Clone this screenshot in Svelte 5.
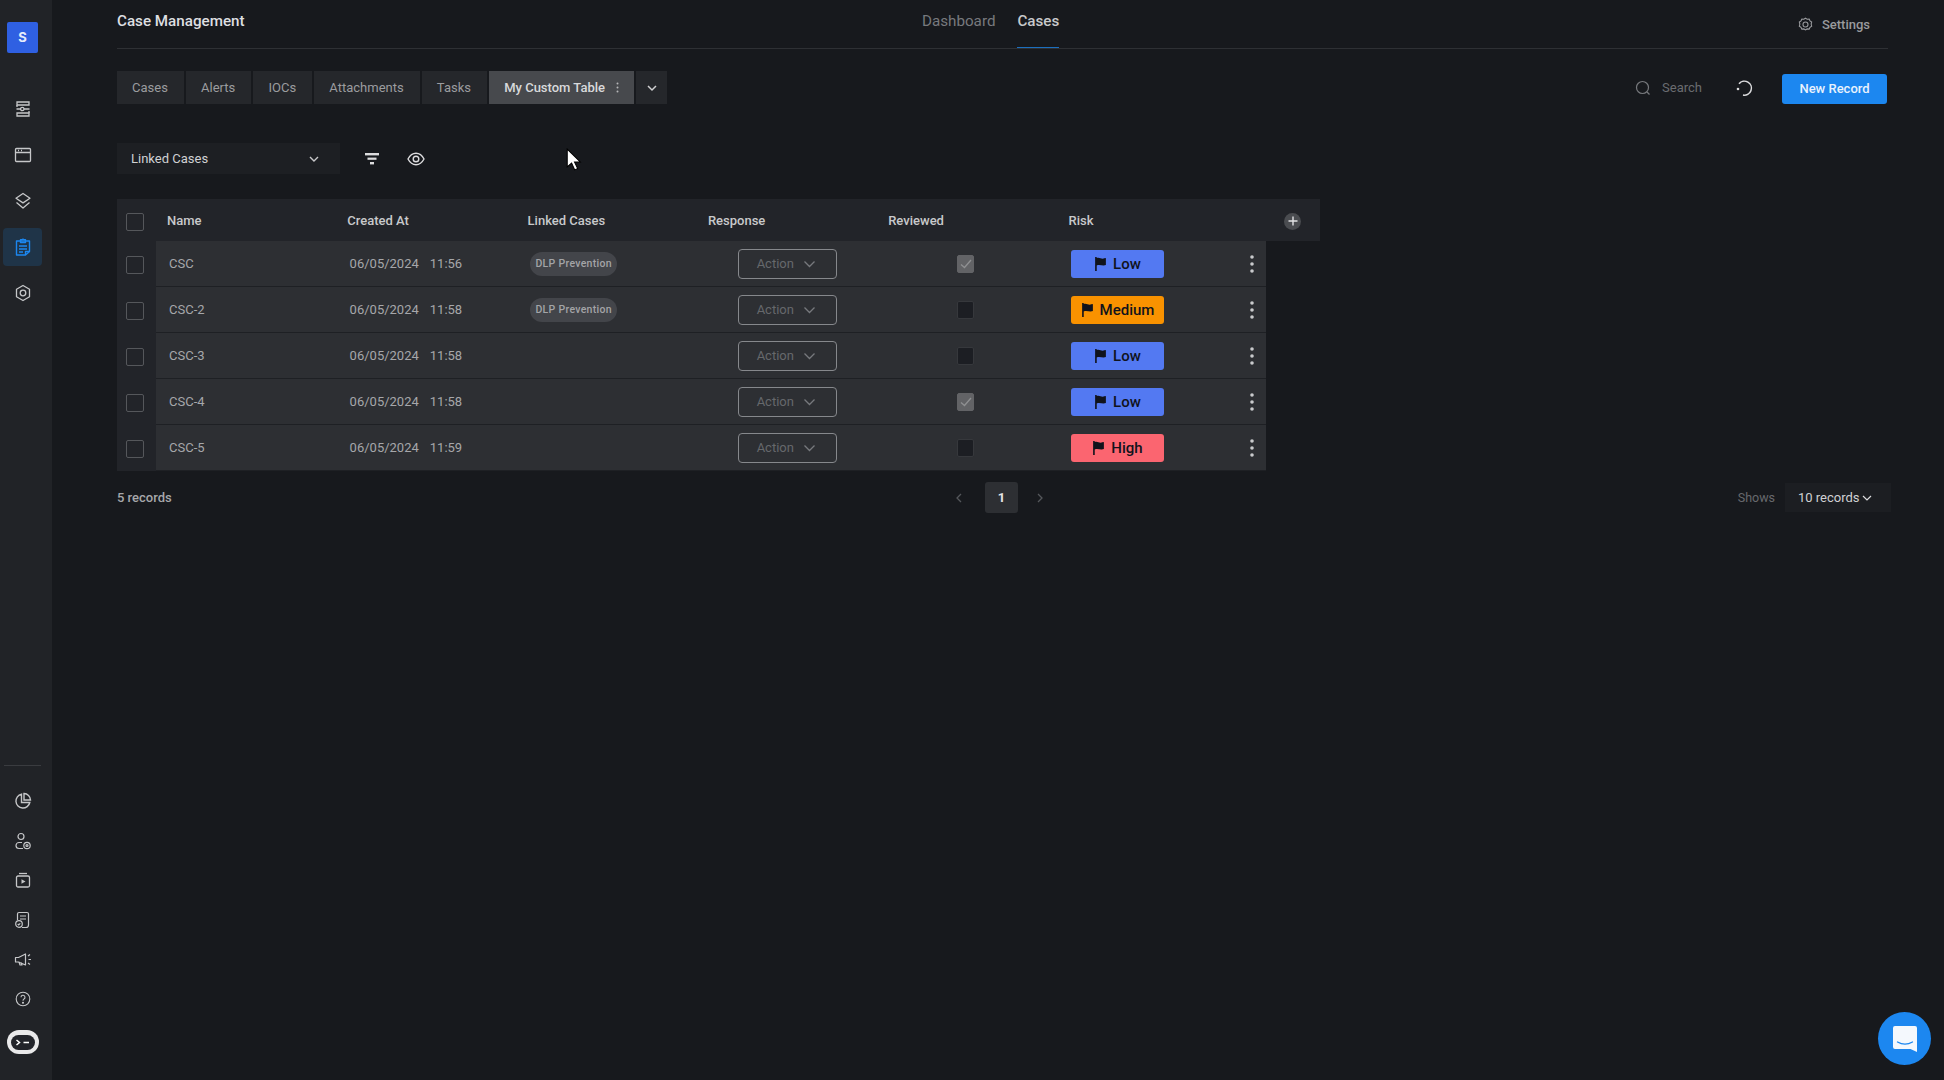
<script>
  const tabs = ['Cases', 'Alerts', 'IOCs', 'Attachments', 'Tasks'];
  const columns = ['Name', 'Created At', 'Linked Cases', 'Response', 'Reviewed', 'Risk'];
  const rows = [
    { name: 'CSC', time: '11:56', linked: true, reviewed: true, risk: 'Low' },
    { name: 'CSC-2', time: '11:58', linked: true, reviewed: false, risk: 'Medium' },
    { name: 'CSC-3', time: '11:58', linked: false, reviewed: false, risk: 'Low' },
    { name: 'CSC-4', time: '11:58', linked: false, reviewed: true, risk: 'Low' },
    { name: 'CSC-5', time: '11:59', linked: false, reviewed: false, risk: 'High' }
  ];
</script>

<div class="app">
  <aside class="sidebar">
    <div class="logo">S</div>
    <nav class="nav-top">
      <div class="slot">
        <svg width="18" height="18" viewBox="0 0 18 18" fill="none" stroke="currentColor" stroke-width="1.3">
          <path d="M3 2h12v3H3zM3 13h12v3H3z" />
          <path d="M2.500 9h4M10 9h5.500M3 5v2M15 11v2" />
          <circle cx="8.300" cy="9" r="1.700" />
        </svg>
      </div>
      <div class="slot">
        <svg width="18" height="18" viewBox="0 0 18 18" fill="none" stroke="currentColor" stroke-width="1.3">
          <rect x="1.500" y="2.500" width="15" height="13" rx="1" />
          <path d="M1.500 6.500h15M4 4.500h1M7 4.500h1" />
        </svg>
      </div>
      <div class="slot">
        <svg width="18" height="18" viewBox="0 0 18 18" fill="none" stroke="currentColor" stroke-width="1.3" stroke-linejoin="round">
          <path d="M9 1.500l7 4.700-7 4.700-7-4.700z" />
          <path d="M2.500 10.500L9 16l6.500-5.500" />
        </svg>
      </div>
      <div class="slot active">
        <svg width="18" height="20" viewBox="0 0 18 20" fill="none" stroke="currentColor" stroke-width="1.400" stroke-linejoin="round">
          <path d="M2.500 4h13v10.500L11.500 18h-9z" />
          <path d="M6.500 4V2.800h1.600a1 1 0 0 1 1.800 0h1.600v2.700h-5z" />
          <path d="M5 9h8M5 12h8M5 15h4M11.500 18v-3.500h4" />
        </svg>
      </div>
      <div class="slot">
        <svg width="18" height="18" viewBox="0 0 18 18" fill="none" stroke="currentColor" stroke-width="1.300" stroke-linejoin="round">
          <path d="M9 1.500l6.500 3.700v7.600L9 16.500l-6.500-3.700V5.200z" />
          <circle cx="9" cy="9" r="2.800" />
        </svg>
      </div>
    </nav>
    <div class="nav-bottom">
      <div class="slot-sm">
        <svg width="18" height="18" viewBox="0 0 18 18" fill="none" stroke="currentColor" stroke-width="1.400">
          <path d="M7.500 2.200A7 7 0 1 0 15.800 10.500H7.500z" />
          <path d="M10 1.500a6.800 6.800 0 0 1 6.500 6.500H10z" />
        </svg>
      </div>
      <div class="slot-sm">
        <svg width="18" height="18" viewBox="0 0 18 18" fill="none" stroke="currentColor" stroke-width="1.200">
          <circle cx="7" cy="4.500" r="3" />
          <path d="M8 10.500H5a3 3 0 0 0 0 6h4" />
          <circle cx="13" cy="13.500" r="3.200" />
          <circle cx="13" cy="13.500" r="1" />
        </svg>
      </div>
      <div class="slot-sm">
        <svg width="18" height="18" viewBox="0 0 18 18" fill="none" stroke="currentColor" stroke-width="1.300">
          <rect x="2.500" y="5" width="13" height="11" rx="1.500" />
          <path d="M5 2.500h8" />
          <path d="M7.500 8.200l4 2.300-4 2.300z" fill="currentColor" stroke="none" />
        </svg>
      </div>
      <div class="slot-sm">
        <svg width="18" height="18" viewBox="0 0 18 18" fill="none" stroke="currentColor" stroke-width="1.200">
          <path d="M3.500 9V3A1.500 1.500 0 0 1 5 1.500h8A1.500 1.500 0 0 1 14.500 3v11a2.500 2.500 0 0 1-2.500 2.500H8" />
          <path d="M6 5h6M6 8h6" />
          <circle cx="5" cy="13" r="3.300" />
          <path d="M3.700 13l1 1 1.600-1.700" />
        </svg>
      </div>
      <div class="slot-sm">
        <svg width="18" height="18" viewBox="0 0 18 18" fill="none" stroke="currentColor" stroke-width="1.200" stroke-linejoin="round">
          <path d="M1.500 6.500h3l7-3.500v11l-7-3h-3z" />
          <path d="M5 11l1 3h2l-.8-2.200M14 5l2-1.500M14.500 8.500H17M14 12l2 1.500" />
        </svg>
      </div>
      <div class="slot-sm">
        <svg width="16" height="16" viewBox="0 0 16 16" fill="none" stroke="currentColor" stroke-width="1.100">
          <circle cx="8" cy="8" r="6.800" />
          <path d="M6 6.300a2 2 0 1 1 3 1.700c-.7.400-1 .8-1 1.700" />
          <circle cx="8" cy="11.700" r=".5" fill="currentColor" />
        </svg>
      </div>
      <div class="terminal">
        <svg width="24" height="15" viewBox="0 0 24 15" fill="none" stroke="#fff" stroke-width="1.500">
          <rect width="24" height="15" rx="7.500" fill="#22242a" stroke="none" />
          <path d="M5.500 5L8.500 7.500l-3 2.500M12.500 7.500H18" />
        </svg>
      </div>
    </div>
  </aside>

  <main class="main">
    <header class="header">
      <h1 class="title">Case Management</h1>
      <nav class="top-nav">
        <span class="top-link">Dashboard</span>
        <span class="top-link current">Cases</span>
      </nav>
      <div class="settings">
        <svg width="15" height="15" viewBox="0 0 18 18" fill="none" stroke="currentColor" stroke-width="1.300">
          <path d="M9 1.500l2 1.200 2.400-.2 1 2.100 2 1.400-.6 2.500.6 2.500-2 1.400-1 2.100-2.400-.2-2 1.200-2-1.200-2.400.2-1-2.100-2-1.400.6-2.500-.6-2.500 2-1.400 1-2.100 2.400.2z" />
          <circle cx="9" cy="9" r="3" />
        </svg>
        <span>Settings</span>
      </div>
    </header>

    <div class="toolbar">
      <div class="tabs">
        {#each tabs as tab}
          <button class="tab">{tab}</button>
        {/each}
        <button class="tab selected">
          My Custom Table
          <svg width="3" height="11" viewBox="0 0 3 11" fill="#b5b6b8">
            <circle cx="1.500" cy="1.500" r="1" /><circle cx="1.500" cy="5.500" r="1" /><circle cx="1.500" cy="9.500" r="1" />
          </svg>
        </button>
        <button class="tab more" aria-label="More tabs">
          <svg width="12" height="8" viewBox="0 0 12 8" fill="none" stroke="#d0d0d2" stroke-width="1.500"><path d="M2 2l4 4 4-4" /></svg>
        </button>
      </div>
      <div class="actions">
        <div class="search">
          <svg width="16" height="16" viewBox="0 0 16 16" fill="none" stroke="#77797d" stroke-width="1.200">
            <circle cx="7.500" cy="7.500" r="6" /><path d="M12 12l2.500 2.500" />
          </svg>
          <span>Search</span>
        </div>
        <svg class="refresh" width="18" height="18" viewBox="0 0 18 18" fill="none" stroke="#dcdcde" stroke-width="1.500">
          <path d="M4 4.700a7 7 0 1 1 4 11.300" />
          <circle cx="3" cy="10" r="1.300" fill="#dcdcde" stroke="none" />
        </svg>
        <button class="new-record">New Record</button>
      </div>
    </div>

    <div class="view-row">
      <div class="view-select">
        <span>Linked Cases</span>
        <svg width="12" height="8" viewBox="0 0 12 8" fill="none" stroke="#c8c8ca" stroke-width="1.400"><path d="M2 2l4 4 4-4" /></svg>
      </div>
      <svg class="filter" width="14" height="12" viewBox="0 0 14 12" fill="#dcdcde">
        <rect width="14" height="2.400" /><rect x="2.500" y="4.600" width="9" height="2.200" /><rect x="5" y="9" width="4" height="2.400" />
      </svg>
      <svg class="eye" width="18" height="14" viewBox="0 0 18 14" fill="none" stroke="#dcdcde" stroke-width="1.400">
        <path d="M1 7c2-3.800 4.800-5.700 8-5.700s6 1.900 8 5.700c-2 3.800-4.800 5.700-8 5.700S3 10.800 1 7z" />
        <circle cx="9" cy="7" r="2.800" />
      </svg>
    </div>

    <div class="table">
      <div class="thead">
        <div class="check-cell"><span class="box"></span></div>
        {#each columns as col}
          <div class="th">{col}</div>
        {/each}
        <div class="th-add">
          <span class="add">
            <svg width="10" height="10" viewBox="0 0 10 10" stroke="#e2e2e4" stroke-width="1.400"><path d="M5 .5v9M.5 5h9" /></svg>
          </span>
        </div>
      </div>
      {#each rows as row}
        <div class="row">
          <div class="check-cell"><span class="box"></span></div>
          <div class="cells">
            <div class="td name">{row.name}</div>
            <div class="td date"><span>06/05/2024</span><span>{row.time}</span></div>
            <div class="td">
              {#if row.linked}<span class="pill">DLP Prevention</span>{/if}
            </div>
            <div class="td response">
              <div class="action">
                <span>Action</span>
                <svg width="13" height="8" viewBox="0 0 13 8" fill="none" stroke="#77797d" stroke-width="1.300"><path d="M1.500 1.500l5 5 5-5" /></svg>
              </div>
            </div>
            <div class="td reviewed">
              <span class="tick" class:on={row.reviewed}>
                {#if row.reviewed}
                  <svg width="12" height="10" viewBox="0 0 12 10" fill="none" stroke="#8f9092" stroke-width="1.300"><path d="M1 5.500l3.500 3L11 1" /></svg>
                {/if}
              </span>
            </div>
            <div class="td risk-cell">
              <span class="risk {row.risk.toLowerCase()}">
                <svg width="13" height="14" viewBox="0 0 12 13" fill="#10131c">
                  <path d="M1 0h1.500v13H1zM2.500 1c2.500-1 4 1 6.500.4.800-.2 2-.4 2-.4v6.500c-3 1.200-5.500-.9-8.500.3z" />
                </svg>
                {row.risk}
              </span>
            </div>
            <div class="td kebab">
              <svg width="4" height="18" viewBox="0 0 4 18" fill="#c9cacc">
                <circle cx="2" cy="2" r="1.800" /><circle cx="2" cy="9" r="1.800" /><circle cx="2" cy="16" r="1.800" />
              </svg>
            </div>
          </div>
        </div>
      {/each}
    </div>

    <div class="footer">
      <span class="count">5 records</span>
      <div class="pager">
        <svg width="7" height="10" viewBox="0 0 7 10" fill="none" stroke="#55575b" stroke-width="1.300"><path d="M6 1L2 5l4 4" /></svg>
        <span class="page">1</span>
        <svg width="7" height="10" viewBox="0 0 7 10" fill="none" stroke="#55575b" stroke-width="1.300"><path d="M1 1l4 4-4 4" /></svg>
      </div>
      <div class="shows">
        <span class="shows-label">Shows</span>
        <div class="per-page">
          <span>10 records</span>
          <svg width="10" height="6" viewBox="0 0 10 6" fill="none" stroke="#dcdcde" stroke-width="1.200"><path d="M1 1l4 4 4-4" /></svg>
        </div>
      </div>
    </div>
  </main>

  <svg class="cursor" width="16" height="24" viewBox="0 0 15 23">
    <path d="M1 1v17l4.200-3.600 3 6.600 2.800-1.300-3-6.300h5.500z" fill="#fff" stroke="#000" stroke-width="1" />
  </svg>

  <div class="chat">
    <svg width="24" height="26" viewBox="0 0 24 26">
      <path d="M2 0h20a2 2 0 0 1 2 2v24l-6.500-3H2a2 2 0 0 1-2-2V2a2 2 0 0 1 2-2z" fill="#f4f8fd" />
      <path d="M4.500 16c4.500 2.600 10.500 2.600 15 0" fill="none" stroke="#1c87f0" stroke-width="1.300" stroke-linecap="round" />
    </svg>
  </div>
</div>

<style>
  :global(body) {
    margin: 0;
    background: #17191d;
  }
  .app {
    display: flex;
    height: 1080px;
    overflow: hidden;
    background: #17191d;
    color: #d8d9db;
    font-family: Roboto, "Liberation Sans", sans-serif;
    font-size: 13px;
  }
  .sidebar {
    flex: 0 0 52px;
    box-sizing: border-box;
    padding-right: 7px;
    display: flex;
    flex-direction: column;
    align-items: center;
    background: #212327;
    color: #c6c7c9;
  }
  .logo {
    width: 31px;
    height: 31px;
    margin-top: 22px;
    border-radius: 2px;
    background: #2f60e2;
    color: #e6ecfb;
    font: 700 13px/31px Inter, sans-serif;
    text-align: center;
  }
  .nav-top {
    margin-top: 33px;
    display: flex;
    flex-direction: column;
  }
  .slot {
    width: 39px;
    height: 46px;
    display: flex;
    align-items: center;
    justify-content: center;
    box-sizing: border-box;
  }
  .slot.active {
    height: 38px;
    margin: 4px 0;
    border-radius: 4px;
    background: #1f3448;
    color: #1c87f0;
  }
  .nav-bottom {
    margin-top: auto;
    width: 37px;
    padding: 26px 0 26px;
    border-top: 1px solid #3a3c40;
    display: flex;
    flex-direction: column;
    align-items: center;
    gap: 21.7px;
  }
  .slot-sm {
    height: 18px;
    display: flex;
    align-items: center;
  }
  .terminal {
    width: 32px;
    height: 24px;
    border-radius: 12px;
    background: #e9e9ea;
    display: flex;
    align-items: center;
    justify-content: center;
  }
  .main {
    flex: 1;
    padding: 0 56px 0 65px;
  }
  .header {
    height: 48px;
    display: flex;
    align-items: center;
    border-bottom: 1px solid #2e3034;
  }
  .title {
    width: 805px;
    margin: 0;
    padding-bottom: 6px;
    font-size: 15.2px;
    font-weight: 500;
    color: #dedfe1;
  }
  .top-nav {
    display: flex;
    gap: 22px;
    align-self: stretch;
  }
  .top-link {
    display: flex;
    align-items: center;
    padding-bottom: 6px;
    font-size: 15.2px;
    color: #77797d;
  }
  .top-link.current {
    color: #c8c9cb;
    font-weight: 500;
    box-shadow: inset 0 -1px 0 #1c6fbe;
  }
  .settings {
    margin-left: auto;
    margin-right: 18px;
    display: flex;
    align-items: center;
    gap: 9px;
    color: #9a9b9e;
    font-weight: 500;
  }
  .toolbar {
    margin-top: 22px;
    display: flex;
    align-items: center;
    justify-content: space-between;
  }
  .tabs {
    display: flex;
    gap: 2px;
  }
  .tab {
    height: 33px;
    padding: 0 16.2px 0 15px;
    border: 0;
    display: flex;
    align-items: center;
    gap: 11px;
    background: #25272b;
    color: #9b9c9f;
    font: 400 13px Roboto, sans-serif;
  }
  .tab.selected {
    padding: 0 15px;
    background: #47494d;
    color: #d8d9db;
    font-weight: 500;
  }
  .tab.more {
    width: 31px;
    padding: 0;
    justify-content: center;
  }
  .actions {
    display: flex;
    align-items: center;
    padding-right: 1px;
  }
  .search {
    display: flex;
    align-items: center;
    gap: 11px;
    color: #6a6c70;
  }
  .refresh {
    margin-left: 33px;
  }
  .new-record {
    height: 30px;
    width: 105px;
    margin: 2px 0 0 29px;
    border: 0;
    border-radius: 3px;
    background: #1c87f0;
    color: #e8f2fd;
    font: 500 13px Roboto, sans-serif;
  }
  .view-row {
    margin-top: 39px;
    height: 31px;
    display: flex;
    align-items: center;
  }
  .view-select {
    width: 223px;
    height: 31px;
    box-sizing: border-box;
    padding: 0 20px 0 14px;
    display: flex;
    align-items: center;
    justify-content: space-between;
    background: #1d1f23;
    color: #d0d1d3;
  }
  .filter {
    margin-left: 25px;
  }
  .eye {
    margin-left: 28px;
  }
  .table {
    margin-top: 25px;
    width: 1203px;
  }
  .thead {
    display: grid;
    grid-template-columns: 39px repeat(6, 180.3px) 1fr;
    height: 42px;
    background: #222429;
  }
  .th {
    padding-left: 11px;
    line-height: 44px;
    font-weight: 500;
    color: #c8c9cb;
  }
  .th-add {
    display: flex;
    align-items: center;
    justify-content: flex-end;
    padding-right: 19px;
  }
  .add {
    width: 17px;
    height: 17px;
    border-radius: 50%;
    background: #4a4c50;
    display: flex;
    align-items: center;
    justify-content: center;
  }
  .check-cell {
    display: flex;
    align-items: center;
    justify-content: center;
    box-sizing: border-box;
    width: 39px;
    padding: 2px 3px 0 0;
    background: #222429;
  }
  .box {
    width: 18px;
    height: 18px;
    box-sizing: border-box;
    border: 1.5px solid #55575b;
    border-radius: 2px;
  }
  .row {
    display: flex;
    width: 1149px;
    height: 46px;
  }
  .cells {
    flex: 1;
    display: grid;
    grid-template-columns: repeat(6, 180.6px) 1fr;
    background: #2d2f33;
    border-bottom: 1px solid #1e2024;
  }
  .td {
    display: flex;
    align-items: center;
    padding-left: 13px;
    color: #a6a7aa;
    min-width: 0;
  }
  .date {
    gap: 11px;
  }
  .pill {
    height: 24px;
    width: 87px;
    border-radius: 12px;
    background: #43454a;
    color: #a3a4a7;
    font-size: 10.5px;
    font-weight: 500;
    letter-spacing: 0.3px;
    line-height: 24px;
    text-align: center;
    white-space: nowrap;
  }
  .response {
    padding-left: 40px;
  }
  .action {
    width: 99px;
    height: 30px;
    box-sizing: border-box;
    padding-right: 2px;
    border: 1.5px solid #86888c;
    border-radius: 4px;
    display: flex;
    align-items: center;
    justify-content: center;
    gap: 9px;
    color: #66686c;
  }
  .reviewed {
    padding-left: 79px;
  }
  .tick {
    width: 17px;
    height: 18px;
    box-sizing: border-box;
    border: 1px solid #36383c;
    border-radius: 2px;
    background: #1c1e23;
    display: flex;
    align-items: center;
    justify-content: center;
  }
  .tick.on {
    background: #626366;
    border-color: #626366;
  }
  .risk-cell {
    padding-left: 12px;
  }
  .risk {
    width: 93px;
    height: 28px;
    border-radius: 3px;
    display: flex;
    align-items: center;
    justify-content: center;
    gap: 6px;
    color: #10131c;
    font-size: 15px;
    font-weight: 500;
  }
  .risk.low {
    background: #5379f2;
  }
  .risk.medium {
    background: #f99200;
  }
  .risk.high {
    background: #fb6570;
  }
  .kebab {
    padding-left: 10px;
  }
  .footer {
    margin-top: 11px;
    height: 31px;
    display: flex;
    align-items: center;
    color: #a6a7aa;
  }
  .count {
    width: 838px;
    font-weight: 500;
  }
  .pager {
    display: flex;
    align-items: center;
  }
  .page {
    width: 33px;
    height: 31px;
    margin: 0 19px 0 23px;
    border-radius: 3px;
    background: #2d2f33;
    color: #e4e4e6;
    font-weight: 700;
    line-height: 31px;
    text-align: center;
  }
  .shows {
    margin-left: auto;
    margin-right: -3px;
    display: flex;
    align-items: center;
    gap: 10px;
  }
  .shows-label {
    color: #68696d;
    font-size: 12.5px;
  }
  .per-page {
    width: 106px;
    height: 29px;
    box-sizing: border-box;
    padding-left: 13px;
    display: flex;
    align-items: center;
    gap: 2px;
    background: #1c1e22;
    color: #d0d1d3;
  }
  .cursor {
    position: absolute;
    left: 566px;
    top: 148px;
  }
  .chat {
    position: absolute;
    left: 1878px;
    top: 1012px;
    width: 53px;
    height: 53px;
    border-radius: 50%;
    background: #1c87f0;
    display: flex;
    align-items: center;
    justify-content: center;
  }
</style>
